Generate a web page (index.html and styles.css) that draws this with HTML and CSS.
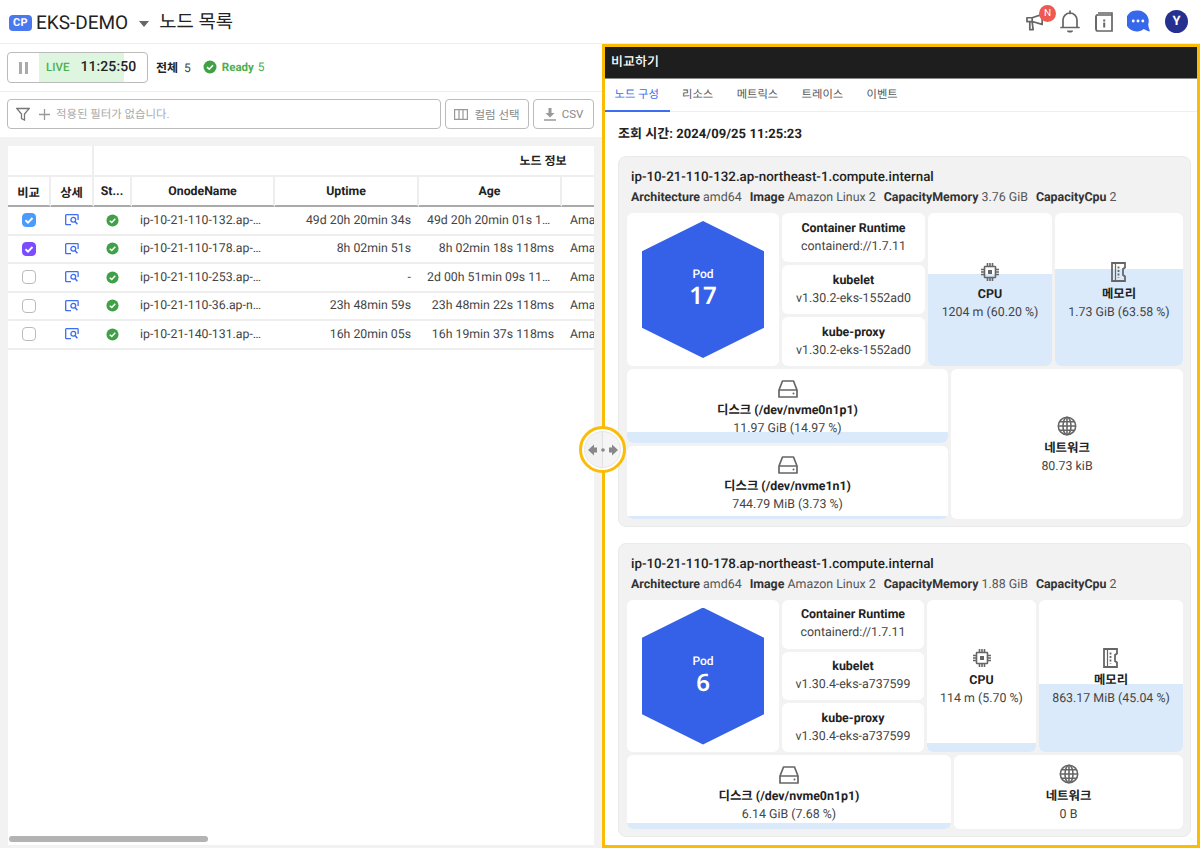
FILE: index.html
```html
<!DOCTYPE html>
<html lang="ko">
<head>
<meta charset="utf-8">
<title>노드 목록</title>
<link rel="stylesheet" href="styles.css">
</head>
<body>
<svg class="defs" width="0" height="0" aria-hidden="true">
  <symbol id="i-cpu" viewBox="0 0 20 20"><g fill="none" stroke="#666" stroke-width="1.6"><rect x="4.5" y="4.5" width="11" height="11" rx=".5"/><path d="M7.5 1v3M10 1v3M12.5 1v3M7.5 16v3M10 16v3M12.5 16v3M1 7.5h3M1 10h3M1 12.5h3M16 7.5h3M16 10h3M16 12.5h3"/></g><rect x="8" y="8" width="4" height="4" fill="#666"/></symbol>
  <symbol id="i-mem" viewBox="0 0 16 20"><path d="M1 1h13v4.500l-2 1.500v6l2 1.500V19H1z" fill="none" stroke="#666" stroke-width="1.800"/><path d="M4.500 1v18" stroke="#666" stroke-width="1.200"/><path d="M7.500 4.500v11" stroke="#666" stroke-width="1.800" stroke-dasharray="2 1.500"/></symbol>
  <symbol id="i-disk" viewBox="0 0 20 18"><path d="M4.500 1h11L19 10v7H1v-7z" fill="none" stroke="#666" stroke-width="1.700" stroke-linejoin="round"/><path d="M1 10h18" stroke="#666" stroke-width="1.700"/><circle cx="15.500" cy="13.500" r="1" fill="#666"/></symbol>
  <symbol id="i-globe" viewBox="0 0 20 20"><g fill="none" stroke="#666" stroke-width="1.600"><circle cx="10" cy="10" r="8.700"/><ellipse cx="10" cy="10" rx="4" ry="8.700"/><path d="M10 1.300v17.400M1.300 10h17.400M2.500 5.800h15M2.500 14.200h15"/></g></symbol>
  <symbol id="i-view" viewBox="0 0 14 12"><path d="M6 10.700H1.500a.8.8 0 0 1-.8-.8V1.500a.8.8 0 0 1 .8-.8h10.800a.8.8 0 0 1 .8.8V6" fill="none" stroke="#3b6ef0" stroke-width="1.300"/><circle cx="8.300" cy="5.800" r="2.400" fill="none" stroke="#3b6ef0" stroke-width="1.300"/><path d="M10 7.600l2.400 2.600" stroke="#3b6ef0" stroke-width="1.500"/></symbol>
  <symbol id="i-ok" viewBox="0 0 14 14"><circle cx="7" cy="7" r="6.500" fill="#3fa047"/><path d="M4 7.200l2.200 2L10 5.200" fill="none" stroke="#fff" stroke-width="1.600"/></symbol>
  <symbol id="i-tick" viewBox="0 0 14 14"><path d="M3.500 7.300l2.500 2.300 4.500-4.600" fill="none" stroke="#fff" stroke-width="1.900"/></symbol>
</svg>

<div class="app">
  <header class="topbar">
    <span class="cp">CP</span>
    <span class="cluster">EKS-DEMO</span>
    <span class="caret"></span>
    <h1 class="title">노드 목록</h1>
    <div class="top-icons">
      <span class="megaphone">
        <svg width="19" height="19" viewBox="0 0 20 19"><path d="M1 4.500h5.500L17 1v10.500L6.500 8.500H1zM4 9v8h3.500l-1-8M6.500 4.500v4" fill="none" stroke="#666" stroke-width="1.800" stroke-linejoin="round"/></svg>
        <span class="badge">N</span>
      </span>
      <svg class="ic-bell" width="20" height="23" viewBox="0 0 20 23"><path d="M10 1v2.500M3 17v-7a7 7 0 0 1 14 0v7M1 17.500h18" fill="none" stroke="#666" stroke-width="1.700" stroke-linecap="round"/><path d="M7 20.500h6a3 2 0 0 1-6 0z" fill="#666"/></svg>
      <svg class="ic-book" width="18" height="20" viewBox="0 0 18 20"><path d="M3 1h14v2H3a1.500 1.500 0 0 0-2 1.500V17a2 2 0 0 0 2 2h14V3.500" fill="none" stroke="#666" stroke-width="1.700"/><path d="M1 4.500V17" stroke="#666" stroke-width="1.700"/><rect x="8.200" y="7.500" width="2" height="2" fill="#666"/><rect x="8.200" y="10.500" width="2" height="5" fill="#666"/></svg>
      <svg class="ic-chat" width="23" height="23" viewBox="0 0 24 23"><path d="M11.500 0a11.300 11 0 0 1 10.600 14.500c.3 2.500 1 4.800 1.900 7.300-2.500-.3-4.700-1.400-6.500-2.600A11.300 11 0 1 1 11.500 0z" fill="#3767ea"/><circle cx="6.500" cy="11" r="1.500" fill="#fff"/><circle cx="11.500" cy="11" r="1.500" fill="#fff"/><circle cx="16.500" cy="11" r="1.500" fill="#fff"/></svg>
      <span class="avatar">Y</span>
    </div>
  </header>

  <main class="main">
    <section class="left">
      <div class="status-row">
        <div class="live-box">
          <span class="pause"></span>
          <div class="live-zone"><span class="live">LIVE</span><span class="clock">11:25:50</span></div>
        </div>
        <span class="count"><b>전체</b> 5</span>
        <span class="ready"><svg width="14" height="14"><use href="#i-ok"/></svg><b>Ready</b> 5</span>
      </div>
      <div class="filter-row">
        <div class="filter">
          <svg width="14" height="14" viewBox="0 0 14 14"><path d="M.8 1.500h12.400L8.500 7v6l-3-1.500V7z" fill="none" stroke="#777" stroke-width="1.300"/></svg>
          <svg class="plus" width="11" height="11" viewBox="0 0 11 11"><path d="M5.500 0v11M0 5.500h11" stroke="#999" stroke-width="1.300"/></svg>
          <span>적용된 필터가 없습니다.</span>
        </div>
        <button class="btn btn-col"><svg width="14" height="11" viewBox="0 0 14 11"><path d="M.6.600h12.800v9.800H.6zM5 .6v9.800M9 .6v9.800" fill="none" stroke="#999" stroke-width="1.200"/></svg>컬럼 선택</button>
        <button class="btn btn-csv"><svg width="12" height="13" viewBox="0 0 12 13"><path d="M4.500 0h3v5h3L6 9.500 1.500 5h3z" fill="#999"/><path d="M0 12h12" stroke="#999" stroke-width="1.500"/></svg>CSV</button>
      </div>
      <div class="table-area">
        <div class="table-card">
          <div class="table-scroll">
            <table class="grid">
              <colgroup>
                <col class="c-a"><col class="c-b"><col class="c-c"><col class="c-d"><col class="c-e"><col class="c-f"><col class="c-g"><col class="c-h">
              </colgroup>
              <thead>
                <tr class="group-row"><th colspan="2"></th><th colspan="6"><span>노드 정보</span></th></tr>
                <tr class="head-row"><th>비교</th><th>상세</th><th class="ell">St...</th><th>OnodeName</th><th>Uptime</th><th>Age</th><th></th><th></th></tr>
              </thead>
              <tbody>
                <tr><td class="mid"><span class="check on-blue"><svg width="14" height="14"><use href="#i-tick"/></svg></span></td><td class="mid"><svg class="view" width="14" height="12"><use href="#i-view"/></svg></td><td class="mid"><svg class="ok" width="13" height="13"><use href="#i-ok"/></svg></td><td class="name">ip-10-21-110-132.ap-northeast-1.compute.internal</td><td class="num">49d 20h 20min 34s</td><td class="num">49d 20h 20min 01s 118ms</td><td>Amazon Linux 2</td><td></td></tr>
                <tr><td class="mid"><span class="check on-purple"><svg width="14" height="14"><use href="#i-tick"/></svg></span></td><td class="mid"><svg class="view" width="14" height="12"><use href="#i-view"/></svg></td><td class="mid"><svg class="ok" width="13" height="13"><use href="#i-ok"/></svg></td><td class="name">ip-10-21-110-178.ap-northeast-1.compute.internal</td><td class="num">8h 02min 51s</td><td class="num">8h 02min 18s 118ms</td><td>Amazon Linux 2</td><td></td></tr>
                <tr><td class="mid"><span class="check"></span></td><td class="mid"><svg class="view" width="14" height="12"><use href="#i-view"/></svg></td><td class="mid"><svg class="ok" width="13" height="13"><use href="#i-ok"/></svg></td><td class="name">ip-10-21-110-253.ap-northeast-1.compute.internal</td><td class="num">-</td><td class="num">2d 00h 51min 09s 118ms</td><td>Amazon Linux 2</td><td></td></tr>
                <tr><td class="mid"><span class="check"></span></td><td class="mid"><svg class="view" width="14" height="12"><use href="#i-view"/></svg></td><td class="mid"><svg class="ok" width="13" height="13"><use href="#i-ok"/></svg></td><td class="name">ip-10-21-110-36.ap-northeast-1.compute.internal</td><td class="num">23h 48min 59s</td><td class="num">23h 48min 22s 118ms</td><td>Amazon Linux 2</td><td></td></tr>
                <tr><td class="mid"><span class="check"></span></td><td class="mid"><svg class="view" width="14" height="12"><use href="#i-view"/></svg></td><td class="mid"><svg class="ok" width="13" height="13"><use href="#i-ok"/></svg></td><td class="name">ip-10-21-140-131.ap-northeast-1.compute.internal</td><td class="num">16h 20min 05s</td><td class="num">16h 19min 37s 118ms</td><td>Amazon Linux 2</td><td></td></tr>
              </tbody>
            </table>
          </div>
          <div class="hscroll"><span class="thumb"></span></div>
        </div>
      </div>
    </section>

    <section class="right">
      <div class="panel-title">비교하기</div>
      <nav class="tabs">
        <a class="tab active">노드 구성</a><a class="tab">리소스</a><a class="tab">메트릭스</a><a class="tab">트레이스</a><a class="tab">이벤트</a>
      </nav>
      <div class="panel-body">
        <div class="query-time">조회 시간: 2024/09/25 11:25:23</div>

        <article class="node node-a">
          <h2 class="node-name">ip-10-21-110-132.ap-northeast-1.compute.internal</h2>
          <div class="meta"><span><b>Architecture</b> amd64</span><span><b>Image</b> Amazon Linux 2</span><span><b>CapacityMemory</b> 3.76 GiB</span><span><b>CapacityCpu</b> 2</span></div>
          <div class="tiles">
            <div class="top-grid">
              <div class="tile pod-tile"><div class="hex"><span class="pod-label">Pod</span><span class="pod-count">17</span></div></div>
              <div class="stack">
                <div class="tile"><b>Container Runtime</b><span>containerd://1.7.11</span></div>
                <div class="tile"><b>kubelet</b><span>v1.30.2-eks-1552ad0</span></div>
                <div class="tile"><b>kube-proxy</b><span>v1.30.2-eks-1552ad0</span></div>
              </div>
              <div class="tile"><i class="fill" style="height:60.2%"></i><svg class="ico" width="20" height="20"><use href="#i-cpu"/></svg><b>CPU</b><span>1204 m (60.20 %)</span></div>
              <div class="tile"><i class="fill" style="height:63.58%"></i><svg class="ico" width="16" height="20"><use href="#i-mem"/></svg><b>메모리</b><span>1.73 GiB (63.58 %)</span></div>
            </div>
            <div class="bottom-grid">
              <div class="disks">
                <div class="tile"><i class="fill" style="height:14.97%"></i><svg class="ico ico-disk" width="20" height="18"><use href="#i-disk"/></svg><b>디스크 (/dev/nvme0n1p1)</b><span>11.97 GiB (14.97 %)</span></div>
                <div class="tile"><i class="fill" style="height:3.73%"></i><svg class="ico ico-disk" width="20" height="18"><use href="#i-disk"/></svg><b>디스크 (/dev/nvme1n1)</b><span>744.79 MiB (3.73 %)</span></div>
              </div>
              <div class="tile"><svg class="ico" width="20" height="20"><use href="#i-globe"/></svg><b>네트워크</b><span>80.73 kiB</span></div>
            </div>
          </div>
        </article>

        <article class="node node-b">
          <h2 class="node-name">ip-10-21-110-178.ap-northeast-1.compute.internal</h2>
          <div class="meta"><span><b>Architecture</b> amd64</span><span><b>Image</b> Amazon Linux 2</span><span><b>CapacityMemory</b> 1.88 GiB</span><span><b>CapacityCpu</b> 2</span></div>
          <div class="tiles">
            <div class="top-grid">
              <div class="tile pod-tile"><div class="hex"><span class="pod-label">Pod</span><span class="pod-count">6</span></div></div>
              <div class="stack">
                <div class="tile"><b>Container Runtime</b><span>containerd://1.7.11</span></div>
                <div class="tile"><b>kubelet</b><span>v1.30.4-eks-a737599</span></div>
                <div class="tile"><b>kube-proxy</b><span>v1.30.4-eks-a737599</span></div>
              </div>
              <div class="tile"><i class="fill" style="height:5.7%"></i><svg class="ico" width="20" height="20"><use href="#i-cpu"/></svg><b>CPU</b><span>114 m (5.70 %)</span></div>
              <div class="tile"><i class="fill" style="height:45.04%"></i><svg class="ico" width="16" height="20"><use href="#i-mem"/></svg><b>메모리</b><span>863.17 MiB (45.04 %)</span></div>
            </div>
            <div class="bottom-grid">
              <div class="tile"><i class="fill" style="height:7.68%"></i><svg class="ico ico-disk" width="20" height="18"><use href="#i-disk"/></svg><b>디스크 (/dev/nvme0n1p1)</b><span>6.14 GiB (7.68 %)</span></div>
              <div class="tile"><svg class="ico" width="20" height="20"><use href="#i-globe"/></svg><b>네트워크</b><span>0 B</span></div>
            </div>
          </div>
        </article>
      </div>
    </section>

    <div class="handle">
      <div class="handle-inner">
        <svg width="30" height="12" viewBox="0 0 30 12"><path d="M0 6l6-5.500V3.500h3v5H6v3zM30 6l-6-5.500V3.500h-3v5h3v3z" fill="#888"/><circle cx="15" cy="6" r="1.800" fill="#888"/></svg>
      </div>
    </div>
  </main>
</div>
</body>
</html>
```

FILE: styles.css
```css
* { box-sizing: border-box; }
html, body { margin: 0; padding: 0; }
body {
  font-family: Roboto, "Noto Sans CJK KR", sans-serif;
  font-size: 12px;
  color: #333;
  background: #fff;
  width: 1200px;
  height: 848px;
  overflow: hidden;
  text-rendering: geometricPrecision;
}
.defs { position: absolute; }
.app { display: flex; flex-direction: column; height: 848px; }

/* top bar */
.topbar {
  height: 44px;
  display: flex;
  align-items: center;
  padding-left: 9px;
  border-bottom: 1px solid #eee;
  flex: none;
}
.cp {
  width: 23px;
  height: 16px;
  margin-top: 2px;
  background: #4a78ee;
  color: #fff;
  border-radius: 4px;
  font-size: 11px;
  font-weight: 700;
  line-height: 16px;
  text-align: center;
  letter-spacing: .3px;
}
.cluster { font-size: 19px; color: #222; margin-left: 4px; margin-top: 2px; }
.caret {
  width: 0;
  height: 0;
  margin: 4px 0 0 11px;
  border-left: 5px solid transparent;
  border-right: 5px solid transparent;
  border-top: 6px solid #666;
}
.title { font-size: 18.8px; font-weight: 400; color: #222; margin: 0 0 0 10px; line-height: 24px; }
.top-icons { margin-left: auto; display: flex; align-items: center; padding-right: 12px; }
.megaphone { position: relative; display: flex; margin-top: 1px; }
.badge {
  position: absolute;
  left: 13px;
  top: -8px;
  width: 17px;
  height: 17px;
  border-radius: 50%;
  background: #ee5a52;
  color: #fff;
  font-size: 10px;
  line-height: 17px;
  text-align: center;
}
.ic-bell { margin-left: 15px; margin-top: -1px; }
.ic-book { margin-left: 15px; }
.ic-chat { margin-left: 14px; }
.avatar {
  width: 23px;
  height: 23px;
  margin-left: 15px;
  border-radius: 50%;
  background: #25308f;
  color: #fff;
  font-size: 13px;
  font-weight: 700;
  line-height: 23px;
  text-align: center;
}

/* main split */
.main { flex: 1; display: flex; position: relative; min-height: 0; }
.left { width: 602px; flex: none; display: flex; flex-direction: column; }

.status-row {
  height: 48px;
  display: flex;
  align-items: center;
  padding: 0 0 1px 7px;
  border-bottom: 1px solid #eee;
  flex: none;
}
.live-box {
  width: 141px;
  height: 31px;
  border: 1px solid #bbb;
  border-radius: 4px;
  display: flex;
  align-items: stretch;
  padding-left: 31px;
  position: relative;
}
.pause {
  position: absolute;
  left: 11px;
  top: 9px;
  width: 9px;
  height: 12px;
  border-left: 3px solid #aaa;
  border-right: 3px solid #aaa;
}
.live-zone {
  width: 85px;
  background: #def5df;
  display: flex;
  align-items: center;
  padding-left: 7px;
  white-space: nowrap;
}
.live { color: #4caf50; font-size: 11.5px; font-weight: 500; }
.clock { color: #222; font-size: 14px; font-weight: 500; margin-left: 11px; letter-spacing: .1px; }
.count { margin-left: 8px; color: #444; }
.count b { color: #222; margin-right: 3px; }
.ready { margin-left: 12px; display: flex; align-items: center; color: #4caf50; }
.ready b { font-size: 11.5px; font-weight: 700; margin: 0 4px 0 5px; color: #4caf50; }

.filter-row {
  height: 45px;
  display: flex;
  align-items: center;
  gap: 4px;
  padding: 0 8px 1px 7px;
  flex: none;
}
.filter {
  width: 434px;
  height: 30px;
  border: 1px solid #bbb;
  border-radius: 4px;
  display: flex;
  align-items: center;
  padding-left: 8px;
  color: #aaa;
  font-size: 11.4px;
}
.plus { margin: 0 6px 0 9px; }
.btn {
  height: 30px;
  background: #fff;
  border: 1px solid #bbb;
  border-radius: 4px;
  display: flex;
  align-items: center;
  justify-content: center;
  gap: 6px;
  color: #888;
  font: inherit;
  font-size: 11.5px;
  padding: 0;
}
.btn-col { width: 84px; }
.btn-csv { width: 61px; }

.table-area {
  flex: 1;
  min-height: 0;
  background: #f2f2f2;
  padding: 9px 8px 3px 8px;
  display: flex;
}
.table-card {
  flex: 1;
  min-width: 0;
  background: #fff;
  display: flex;
  flex-direction: column;
}
.table-scroll { flex: 1; min-height: 0; overflow: hidden; }
.grid { width: 984px; table-layout: fixed; border-collapse: separate; border-spacing: 0; font-size: 12.3px; }
.c-a { width: 43px; } .c-b { width: 43px; } .c-c { width: 38px; } .c-d { width: 143px; }
.c-e { width: 144px; } .c-f { width: 143px; } .c-g { width: 143px; } .c-h { width: 287px; }
.grid th { font-weight: 700; color: #222; padding: 0; text-align: center; }
.group-row th { height: 31px; font-size: 12px; border-bottom: 2px solid #eee; }
.group-row th:first-child { border-right: 2px solid #eee; }
.head-row th { height: 30px; padding-top: 2px; border-bottom: 2px solid #aaa; border-right: 2px solid #eee; }
.grid td {
  height: 28.5px;
  padding: 1px 8px 0;
  border-bottom: 2px solid #eee;
  color: #444;
  white-space: nowrap;
  overflow: hidden;
  text-overflow: ellipsis;
  line-height: 16px;
}
.grid td.mid { padding: 0 2px 0 0; text-align: center; }
.grid td.name { padding-right: 11px; }
.grid td.num { text-align: right; }
.check {
  display: inline-block;
  width: 14px;
  height: 14px;
  border: 1px solid #bbb;
  border-radius: 4px;
  vertical-align: middle;
  background: #fff;
}
.check svg { display: block; margin: -1px; }
.on-blue { background: #4d9aff; border-color: #4d9aff; }
.on-purple { background: #7c4dff; border-color: #7c4dff; }
.view, .ok { vertical-align: middle; }
.hscroll { height: 10px; flex: none; padding: 1px 0 0 1px; }
.thumb { display: block; width: 199px; height: 6px; background: #b3b3b3; border-radius: 3px; }

/* compare panel */
.right {
  flex: 1;
  min-width: 0;
  border: 3px solid #fbbc05;
  display: flex;
  flex-direction: column;
  font-size: 12.4px;
}
.panel-title {
  height: 32px;
  flex: none;
  background: #1e1e1e;
  border-bottom: 1px solid #888;
  color: #fff;
  font-size: 13px;
  font-weight: 500;
  line-height: 31px;
  padding-left: 6px;
}
.tabs { height: 33px; flex: none; display: flex; border-bottom: 1px solid #eee; }
.tab { padding: 0 11.7px; line-height: 31px; color: #555; font-size: 11.3px; }
.tab.active { color: #3b6ef0; border-bottom: 2px solid #3b6ef0; height: 33px; padding: 0 11.5px 0 9.5px; }
.panel-body { flex: 1; min-height: 0; padding: 14px 6px 0 13px; }
.query-time { font-size: 13px; font-weight: 700; color: #222; line-height: 18px; margin-bottom: 12px; letter-spacing: .05px; }

.node {
  background: #f2f2f2;
  border: 1px solid #eaeaea;
  border-radius: 8px;
  padding: 11px 8px 7px 8px;
  margin-bottom: 16px;
}
.node-name { margin: 0 0 0 4px; font-size: 13.35px; font-weight: 500; color: #222; line-height: 19px; }
.meta { display: flex; gap: 8px; margin: 3px 0 7px 4px; line-height: 16px; color: #555; }
.meta b { color: #333; font-weight: 700; }

.tiles { display: flex; flex-direction: column; gap: 3px; }
.top-grid { display: grid; gap: 3px; }
.node-a .top-grid { grid-template-columns: 152px 143px 124px 128px; height: 153px; }
.node-b .top-grid { grid-template-columns: 152px 142px 109px 144px; height: 152px; }
.bottom-grid { display: grid; gap: 3px; }
.node-a .bottom-grid { grid-template-columns: 321px 232px; height: 150px; }
.node-b .bottom-grid { grid-template-columns: 324px 229px; height: 74px; }
.stack, .disks { display: flex; flex-direction: column; gap: 3px; min-height: 0; }
.stack .tile, .disks .tile { flex: 1; min-height: 0; }

.tile {
  position: relative;
  background: #fff;
  border-radius: 6px;
  overflow: hidden;
  display: flex;
  flex-direction: column;
  align-items: center;
  justify-content: center;
  line-height: 18px;
  color: #444;
  white-space: nowrap;
}
.tile b { position: relative; color: #222; font-weight: 700; }
.tile span { position: relative; }
.tile .ico { position: relative; margin: 4px 0; flex: none; }
.tile .ico-disk { margin: 6px 0 4px; }
.fill { position: absolute; left: 0; right: 0; bottom: 0; background: #dbeafb; }

.hex {
  width: 122px;
  height: 137px;
  background: #3560e8;
  clip-path: polygon(50% 0, 100% 22%, 100% 78%, 50% 100%, 0 78%, 0 22%);
  display: flex;
  flex-direction: column;
  align-items: center;
  justify-content: center;
  padding-bottom: 4px;
  color: #fff;
}
.tile .pod-label { font-size: 12px; font-weight: 500; line-height: 16px; }
.tile .pod-count { font-family: "Noto Sans", Roboto, sans-serif; font-size: 24px; font-weight: 600; line-height: 27px; }

.handle {
  position: absolute;
  left: 579px;
  top: 382px;
  width: 47px;
  height: 47px;
  border: 3px solid #fbbc05;
  border-radius: 50%;
  background: #fff;
  padding: 2px;
}
.handle-inner {
  width: 100%;
  height: 100%;
  border-radius: 50%;
  background: linear-gradient(90deg, #f2f2f2 49%, #e2e2e2 49%, #e2e2e2 51%, #f5f5f5 51%);
  border: 1px solid #e6e6e6;
  display: flex;
  align-items: center;
  justify-content: center;
}
```
